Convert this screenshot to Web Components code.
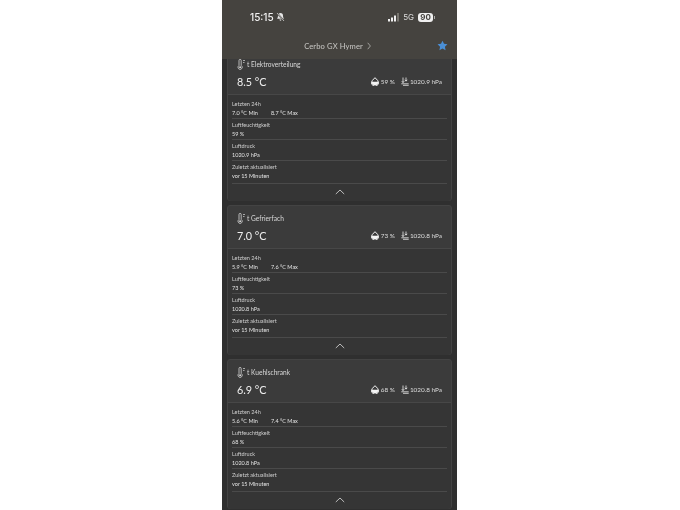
<!DOCTYPE html>
<html lang="de">
<head>
<meta charset="utf-8">
<title>Cerbo GX Hymer</title>
<style>
  html, body { margin: 0; height: 100%; background: #fff; }
  body { overflow: hidden; font-family: "Lato", "Liberation Sans", sans-serif; }
</style>
</head>
<body>
<phone-screen>
  <status-bar slot="top" time="15:15" battery="90"></status-bar>
  <nav-bar slot="top" title="Cerbo GX Hymer"></nav-bar>
  <sensor-card name="t Elektroverteilung" temp="8.5 °C" hum="59 %" press="1020.9 hPa" min="7.0 °C Min" max="8.7 °C Max" updated="vor 15 Minuten"></sensor-card>
  <sensor-card name="t Gefrierfach" temp="7.0 °C" hum="73 %" press="1020.8 hPa" min="5.9 °C Min" max="7.6 °C Max" updated="vor 15 Minuten"></sensor-card>
  <sensor-card name="t Kuehlschrank" temp="6.9 °C" hum="68 %" press="1020.8 hPa" min="5.6 °C Min" max="7.4 °C Max" updated="vor 15 Minuten"></sensor-card>
</phone-screen>

<script>
class PhoneScreen extends HTMLElement {
  constructor() {
    super();
    this.attachShadow({ mode: "open" }).innerHTML = `
      <style>
        :host { display: flex; flex-direction: column; width: 235px; height: 510px; margin-left: 222px; background: #2f2f2f; overflow: hidden; color: #e6e6e6; filter: blur(.3px); }
        header { flex: none; background: #45433f; position: relative; z-index: 1; }
        main { flex: 1; min-height: 0; display: flex; flex-direction: column; gap: 4px; padding: 0 5px; margin-top: -8px; }
      </style>
      <header><slot name="top"></slot></header>
      <main><slot></slot></main>`;
  }
}

class StatusBar extends HTMLElement {
  constructor() {
    super();
    const time = this.getAttribute("time");
    const battery = this.getAttribute("battery");
    this.attachShadow({ mode: "open" }).innerHTML = `
      <style>
        :host { display: flex; align-items: center; justify-content: space-between; height: 18px; padding: 8px 22px 0 28px; font-family: "Inter", "Liberation Sans", sans-serif; color: #f2f2f2; }
        .left, .right { display: flex; align-items: center; }
        .time { font-size: 10px; font-weight: 500; }
        .left svg { margin-left: 2px; }
        .net { font-size: 8px; margin: 0 4px; color: #dcdcdc; }
        .batt { background: #f0f0f0; color: #45433f; font-size: 8px; font-weight: 700; line-height: 9px; width: 15px; text-align: center; border-radius: 3px; }
        .cap { width: 1px; height: 3px; background: #aaa; margin-left: 1px; }
      </style>
      <div class="left">
        <span class="time">${time}</span>
        <svg width="9" height="10" viewBox="0 0 9 10"><path d="M4.500 1c-1.600 0-2.500 1.100-2.500 2.700 0 1.600-.5 2.300-1 3h7c-.5-.7-1-1.400-1-3C7 2.100 6.100 1 4.500 1zM3.400 7.600a1.100 1.100 0 0 0 2.200 0z" fill="#e8e8e8"/><path d="M1 1l7 8" stroke="#45433f" stroke-width="1.600"/><path d="M1 1l7 8" stroke="#e8e8e8" stroke-width=".7"/></svg>
      </div>
      <div class="right">
        <svg width="12" height="9" viewBox="-1 0 12 9"><rect x="0" y="6" width="2" height="2.500" fill="#f0f0f0"/><rect x="3" y="4.500" width="2" height="4" fill="#f0f0f0"/><rect x="6" y="2.500" width="2" height="6" fill="#f0f0f0"/><rect x="9" y="0" width="2" height="8.500" fill="#77756f"/></svg>
        <span class="net">5G</span>
        <span class="batt">${battery}</span><span class="cap"></span>
      </div>`;
  }
}

class NavBar extends HTMLElement {
  constructor() {
    super();
    this.attachShadow({ mode: "open" }).innerHTML = `
      <style>
        :host { display: grid; grid-template-columns: 1fr auto 1fr; align-items: center; box-sizing: border-box; height: 33px; padding: 6px 9px 0 5px; font-size: 7.600px; color: #c9c8c5; letter-spacing: .1px; }
        .title { grid-column: 2; display: flex; align-items: center; gap: 4px; }
        .star { grid-column: 3; justify-self: end; display: flex; }
      </style>
      <div class="title">${this.getAttribute("title")}
        <svg width="4" height="8" viewBox="0 0 4 8"><path d="M.7.8L3.400 4 .7 7.200" fill="none" stroke="#c9c8c5" stroke-width=".7"/></svg>
      </div>
      <div class="star">
        <svg width="11" height="11" viewBox="0 0 24 24"><path d="M12 1.500l3.300 6.900 7.500 1-5.500 5.200 1.400 7.500L12 18.500l-6.700 3.600 1.400-7.500L1.200 9.400l7.500-1z" fill="#4a8fd6"/></svg>
      </div>`;
  }
}

class DetailRow extends HTMLElement {
  constructor() {
    super();
    this.attachShadow({ mode: "open" }).innerHTML = `
      <style>
        :host { display: block; padding-top: 2px; border-bottom: 1px solid #4a4a4a; font-size: 5.500px; line-height: 9px; color: #dcdcdc; }
        :host(:last-of-type) { padding-bottom: 2px; }
        .label { color: #cfcfcf; }
        .value { display: flex; gap: 13px; color: #e2e2e2; }
      </style>
      <div class="label">${this.getAttribute("label")}</div>
      <div class="value"><slot></slot></div>`;
  }
}

class SensorCard extends HTMLElement {
  constructor() {
    super();
    const a = (n) => this.getAttribute(n);
    this.attachShadow({ mode: "open" }).innerHTML = `
      <style>
        :host { display: block; flex: none; background: #3b3b3b; border: 1px solid #434343; border-radius: 3px; box-sizing: border-box; height: 150px; }
        .hero { height: 43px; box-sizing: border-box; padding: 6px 9px 0 9px; border-bottom: 1px solid #474747; }
        .name { display: flex; align-items: center; gap: 1px; height: 12px; font-size: 6.600px; color: #d8d8d8; }
        .main { display: flex; align-items: center; justify-content: space-between; margin-top: 5px; }
        .temp { font-size: 10.800px; color: #efefef; }
        .stats { display: flex; align-items: center; font-size: 6.400px; color: #dedede; }
        .stats svg:first-child { margin-right: 1.500px; }
        .stats svg + span + svg { margin-left: 6px; margin-right: 1px; }
        .details { padding: 3px 4px 0; background: #353535; height: 106px; box-sizing: border-box; display: flex; flex-direction: column; border-radius: 0 0 3px 3px; }
        .toggle { display: flex; justify-content: center; padding-top: 5px; }
      </style>
      <div class="hero">
        <div class="name">
          <svg width="9" height="11" viewBox="0 0 9 11"><path d="M2 1.500a1.100 1.100 0 0 1 2.200 0v5a2.100 2.100 0 1 1-2.200 0z" fill="none" stroke="#d8d8d8" stroke-width=".8"/><circle cx="3.100" cy="8.200" r="1" fill="#d8d8d8"/><path d="M6 1.500h2M6 3.500h1.500" stroke="#d8d8d8" stroke-width=".7"/></svg>
          <span>${a("name")}</span>
        </div>
        <div class="main">
          <span class="temp">${a("temp")}</span>
          <div class="stats">
            <svg width="8" height="9" viewBox="0 0 8 9"><path d="M4 .7L1.400 3.400A3.500 3.500 0 1 0 6.600 3.400z" fill="none" stroke="#f4f4f4" stroke-width="1"/><path d="M.6 4.800h6.800a3.400 3.400 0 0 1-6.800 0z" fill="#f4f4f4"/></svg>
            <span>${a("hum")}</span>
            <svg width="8" height="9" viewBox="0 0 8 9"><path d="M2 .5v5M.8 4.200L2 5.600l1.200-1.400M5 .5v3.500M3.800 2.800L5 4.200l1.200-1.400M.3 6.800h7.400M2 8.300h5.700" fill="none" stroke="#f0f0f0" stroke-width=".8"/></svg>
            <span>${a("press")}</span>
          </div>
        </div>
      </div>
      <div class="details">
        <detail-row label="Letzten 24h"><span>${a("min")}</span><span>${a("max")}</span></detail-row>
        <detail-row label="Luftfeuchtigkeit"><span>${a("hum")}</span></detail-row>
        <detail-row label="Luftdruck"><span>${a("press")}</span></detail-row>
        <detail-row label="Zuletzt aktualisiert"><span>${a("updated")}</span></detail-row>
        <div class="toggle"><svg width="10" height="6" viewBox="0 0 10 6"><path d="M.8 5L5 1l4.200 4" fill="none" stroke="#e0e0e0" stroke-width=".8"/></svg></div>
      </div>`;
  }
}

customElements.define("phone-screen", PhoneScreen);
customElements.define("status-bar", StatusBar);
customElements.define("nav-bar", NavBar);
customElements.define("detail-row", DetailRow);
customElements.define("sensor-card", SensorCard);
</script>
</body>
</html>
